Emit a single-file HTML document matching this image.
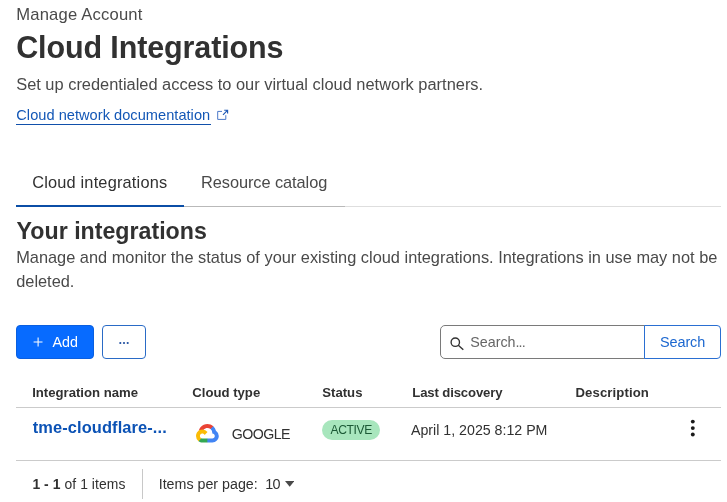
<!DOCTYPE html>
<html><head><meta charset="utf-8">
<style>
html,body{margin:0;padding:0;background:#fff;}
body{width:727px;height:502px;overflow:hidden;position:relative;font-family:"Liberation Sans",sans-serif;color:#313131;}
.abs{position:absolute;white-space:nowrap;line-height:1;}
</style></head><body>
<div id="wrap" style="position:absolute;left:0;top:0;width:727px;height:502px;will-change:transform">
<div class="abs" id="crumb" style="left:16.2px;top:6.95px;font-size:16.6px;color:#4a4a4a;font-weight:normal;letter-spacing:0.2px;">Manage Account</div>
<div class="abs" id="h1" style="left:16.2px;top:31.98px;font-size:30.5px;color:#313131;font-weight:bold;letter-spacing:-0.12px;">Cloud Integrations</div>
<div class="abs" id="sub" style="left:16.2px;top:76.30px;font-size:16.42px;color:#4a4a4a;font-weight:normal;letter-spacing:0px;">Set up credentialed access to our virtual cloud network partners.</div>
<div class="abs" id="doc" style="left:16.3px;top:108.04px;font-size:14.6px;color:#1357b6;font-weight:normal;letter-spacing:0.03px;">Cloud network documentation</div>
<div class="abs" style="left:16px;top:124px;width:194.5px;height:1px;background:#1150ab"></div>
<svg class="abs" id="ext" style="left:215px;top:108px" width="15" height="15" viewBox="215 108 15 15" fill="none" stroke="#2a62bd" stroke-width="1"><path stroke="#4a78c8" d="M222 111.4H217.7V119.4H225.8V115.2"/><path stroke="#1c57b5" stroke-width="1.15" d="M223 114.8L227.4 110.4M224.2 110.2H227.6V113.6"/></svg>
<div class="abs" style="left:184px;top:206px;width:161px;height:1px;background:#b9b9b9"></div>
<div class="abs" style="left:345px;top:206px;width:376px;height:1px;background:#dedede"></div>
<div class="abs" style="left:16px;top:205px;width:168px;height:2px;background:#0b4ea6"></div>
<div class="abs" id="tab1" style="left:32.2px;top:174.35px;font-size:16.36px;color:#313131;font-weight:normal;letter-spacing:0.18px;">Cloud integrations</div>
<div class="abs" id="tab2" style="left:201px;top:174.35px;font-size:16.36px;color:#4a4a4a;font-weight:normal;letter-spacing:-0.07px;">Resource catalog</div>
<div class="abs" id="h2" style="left:16.6px;top:219.66px;font-size:23.2px;color:#313131;font-weight:bold;letter-spacing:0px;">Your integrations</div>
<div class="abs" id="p" style="left:16.2px;top:244.73px;width:711px;white-space:normal;font-size:16.36px;line-height:24px;color:#4a4a4a">Manage and monitor the status of your existing cloud integrations. Integrations in use may not be deleted.</div>
<div class="abs" id="add" style="left:16px;top:325px;width:78px;height:34px;background:#076bff;border:1px solid #0a5fe0;box-sizing:border-box;border-radius:4px"></div>
<svg class="abs" style="left:33px;top:337px" width="10" height="10" viewBox="0 0 10 10" stroke="#fff" stroke-width="1.05" fill="none"><path d="M5.1 0.6v8.9M0.6 5h8.9"/></svg>
<div class="abs" id="addt" style="left:52.4px;top:335.00px;font-size:14.3px;color:#fff;font-weight:normal;letter-spacing:0px;">Add</div>
<div class="abs" id="more" style="left:102px;top:325px;width:44px;height:34px;border:1px solid #2a6bc6;border-radius:4px;box-sizing:border-box"></div>
<svg class="abs" style="left:118px;top:340px" width="12" height="6" viewBox="0 0 12 6" fill="#1f4fa0"><circle cx="2.3" cy="3" r="1.1"/><circle cx="6" cy="3" r="1.1"/><circle cx="9.7" cy="3" r="1.1"/></svg>
<div class="abs" id="searchbox" style="left:440px;top:325px;width:206px;height:34px;border:1px solid #7a7a7a;border-radius:5px 0 0 5px;box-sizing:border-box"></div>
<svg class="abs" style="left:449px;top:336px" width="16" height="16" viewBox="0 0 16 16" fill="none" stroke="#313131" stroke-width="1.35"><circle cx="6.3" cy="6.2" r="4.2"/><path d="M9.3 9.2l5 4.6"/></svg>
<div class="abs" id="searcht" style="left:470.2px;top:335.30px;font-size:14.3px;color:#666;font-weight:normal;letter-spacing:0px;">Search<span style="letter-spacing:-0.9px">...</span></div>
<div class="abs" id="searchbtn" style="left:644px;top:325px;width:77px;height:34px;border:1px solid #2a6fd2;border-radius:0 4px 4px 0;box-sizing:border-box;background:#fff"></div>
<div class="abs" id="searchb" style="left:660px;top:334.87px;font-size:14.45px;color:#1d68d0;font-weight:normal;letter-spacing:-0.1px;">Search</div>
<div class="abs" id="th1" style="left:32.2px;top:386.07px;font-size:13.15px;color:#313131;font-weight:bold;letter-spacing:0px;">Integration name</div>
<div class="abs" id="th2" style="left:192.3px;top:386.07px;font-size:13.15px;color:#313131;font-weight:bold;letter-spacing:0px;">Cloud type</div>
<div class="abs" id="th3" style="left:322.3px;top:386.07px;font-size:13.15px;color:#313131;font-weight:bold;letter-spacing:0px;">Status</div>
<div class="abs" id="th4" style="left:412.3px;top:386.07px;font-size:13.15px;color:#313131;font-weight:bold;letter-spacing:-0.14px;">Last discovery</div>
<div class="abs" id="th5" style="left:575.5px;top:386.07px;font-size:13.15px;color:#313131;font-weight:bold;letter-spacing:0.1px;">Description</div>
<div class="abs" style="left:16px;top:407px;width:705px;height:1px;background:#cbcbcb"></div>
<div class="abs" id="name" style="left:32.8px;top:418.62px;font-size:16.4px;color:#0b52b5;font-weight:bold;letter-spacing:0.11px;">tme-cloudflare-...</div>
<svg class="abs" id="logo" style="left:196px;top:424.4px" width="22.8" height="18.5" viewBox="0 0 256 206" preserveAspectRatio="none">
<path fill="#EA4335" d="m170.252 56.819l22.253-22.253l1.483-9.37C153.437-11.677 88.976-7.496 52.42 33.92C42.267 45.423 34.734 59.764 30.717 74.573l7.97-1.123l44.505-7.34l3.436-3.513c19.797-21.742 53.27-24.667 76.128-6.168l7.496.39Z"/>
<path fill="#4285F4" d="M224.205 73.918a100.249 100.249 0 0 0-30.217-48.722l-31.232 31.232a55.515 55.515 0 0 1 20.379 44.037v5.544c15.35 0 27.797 12.445 27.797 27.796c0 15.352-12.446 27.485-27.797 27.485h-55.671l-5.466 5.934v33.34l5.466 5.231h55.67c39.93.311 72.553-31.494 72.864-71.424a72.303 72.303 0 0 0-31.793-60.453"/>
<path fill="#34A853" d="M71.87 205.796h55.593V161.29H71.87a27.275 27.275 0 0 1-11.399-2.498l-7.887 2.42l-22.409 22.253l-1.952 7.574c12.567 9.489 27.9 14.825 43.647 14.757"/>
<path fill="#FBBC05" d="M71.87 61.425C31.94 61.663-.237 94.228.001 134.159a72.301 72.301 0 0 0 28.222 56.88l32.248-32.246c-13.99-6.322-20.208-22.786-13.887-36.776c6.32-13.99 22.786-20.208 36.775-13.888a27.796 27.796 0 0 1 13.887 13.888l32.248-32.248A72.224 72.224 0 0 0 71.87 61.425"/>
</svg>
<div class="abs" id="google" style="left:231.8px;top:426.98px;font-size:14.2px;color:#313131;font-weight:normal;letter-spacing:-0.55px;">GOOGLE</div>
<div class="abs" id="badge" style="left:322px;top:420px;width:58px;height:20px;border-radius:10px;background:#a8e6bd"></div>
<div class="abs" id="badget" style="left:330.6px;top:424.16px;font-size:12.1px;color:#1c5a36;font-weight:normal;letter-spacing:-0.4px;">ACTIVE</div>
<div class="abs" id="date" style="left:411px;top:422.98px;font-size:14.2px;color:#313131;font-weight:normal;letter-spacing:0px;">April 1, 2025 8:12 PM</div>
<svg class="abs" style="left:689px;top:418px" width="8" height="20" viewBox="0 0 8 20" fill="#1a1a1a"><circle cx="3.8" cy="3.6" r="1.95"/><circle cx="3.8" cy="10.1" r="1.95"/><circle cx="3.8" cy="16.5" r="1.95"/></svg>
<div class="abs" style="left:16px;top:460px;width:705px;height:1px;background:#cbcbcb"></div>
<div class="abs" id="pg1" style="left:32.4px;top:478.13px;font-size:13.9px;color:#313131;font-weight:normal;letter-spacing:0.07px;"><b>1 - 1</b> of 1 items</div>
<div class="abs" style="left:142px;top:469px;width:1px;height:30px;background:#c8c8c8"></div>
<div class="abs" id="pg2" style="left:158.7px;top:477.34px;font-size:14.25px;color:#313131;font-weight:normal;letter-spacing:0px;">Items per page:</div>
<div class="abs" id="pg3" style="left:265.3px;top:477.21px;font-size:14.4px;color:#313131;font-weight:normal;letter-spacing:-0.9px;">10</div>
<svg class="abs" style="left:285px;top:481.4px" width="9.4" height="5.8" viewBox="0 0 9.4 5.8" fill="#4a4a4a"><path d="M0 0h9.4L4.7 5.8z"/></svg>
</div>
</body></html>
